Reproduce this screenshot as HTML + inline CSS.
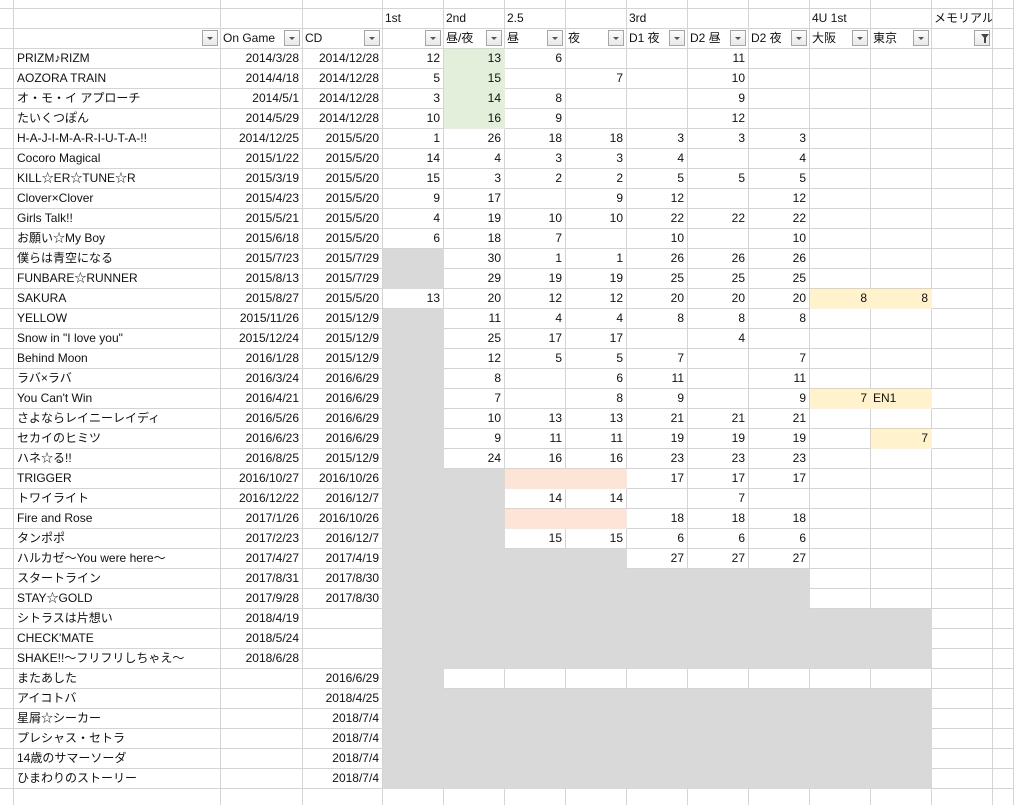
<!DOCTYPE html>
<html><head><meta charset="utf-8">
<style>
html,body{margin:0;padding:0;background:#fff;width:1014px;height:805px;overflow:hidden}
table{border-collapse:separate;border-spacing:0;table-layout:fixed;width:1014px;font-family:"Liberation Sans","Noto Sans CJK JP",sans-serif;font-size:12px;color:#111}
td{box-sizing:border-box;height:20px;padding:0 3px 0 2px;border-right:1px solid #d4d4d4;border-bottom:1px solid #d4d4d4;white-space:nowrap;overflow:hidden;text-align:right;position:relative;line-height:19px}
tr.t td{height:9px}
td.l{text-align:left;padding-left:3px}
td.g{background:#d9d9d9;border-color:#d9d9d9}
td.e{background:#e2efda;border-color:#e2efda}
td.p{background:#fce4d6;border-color:#fce4d6}
td.y{background:#fff2cc;border-color:#fff2cc}
td.h{text-align:left;padding-left:2px}
.b{position:absolute;right:2px;top:1px;width:14px;height:14px;border:1px solid #a6a6a6;background:linear-gradient(#fdfdfd,#e8e8e8)}
.b:after{content:"";position:absolute;left:4px;top:6px;border-left:3px solid transparent;border-right:3px solid transparent;border-top:3px solid #555}
.f:after{left:6px;top:3px;border-left:4px solid transparent;border-right:4px solid transparent;border-top:5px solid #444}
.f:before{content:"";position:absolute;left:9px;top:7px;width:2px;height:5px;background:#444}
</style></head><body>
<table>
<colgroup><col style="width:14px"><col style="width:207px"><col style="width:82px"><col style="width:80px"><col style="width:61px"><col style="width:61px"><col style="width:61px"><col style="width:61px"><col style="width:61px"><col style="width:61px"><col style="width:61px"><col style="width:61px"><col style="width:61px"><col style="width:61px"><col style="width:21px"></colgroup>
<tr class="t"><td></td><td></td><td></td><td></td><td></td><td></td><td></td><td></td><td></td><td></td><td></td><td></td><td></td><td></td><td></td></tr>
<tr><td></td><td></td><td></td><td></td><td class="h">1st</td><td class="h">2nd</td><td class="h">2.5</td><td></td><td class="h">3rd</td><td></td><td></td><td class="h">4U 1st</td><td></td><td class="h">メモリアル</td><td></td></tr>
<tr><td></td><td><span class="b"></span></td><td class="h">On Game<span class="b"></span></td><td class="h">CD<span class="b"></span></td><td><span class="b"></span></td><td class="h">昼/夜<span class="b"></span></td><td class="h">昼<span class="b"></span></td><td class="h">夜<span class="b"></span></td><td class="h">D1 夜<span class="b"></span></td><td class="h">D2 昼<span class="b"></span></td><td class="h">D2 夜<span class="b"></span></td><td class="h">大阪<span class="b"></span></td><td class="h">東京<span class="b"></span></td><td><span class="b f"></span></td><td></td></tr>
<tr><td></td><td class="l">PRIZM♪RIZM</td><td>2014/3/28</td><td>2014/12/28</td><td>12</td><td class="e">13</td><td>6</td><td></td><td></td><td>11</td><td></td><td></td><td></td><td></td><td></td></tr>
<tr><td></td><td class="l">AOZORA TRAIN</td><td>2014/4/18</td><td>2014/12/28</td><td>5</td><td class="e">15</td><td></td><td>7</td><td></td><td>10</td><td></td><td></td><td></td><td></td><td></td></tr>
<tr><td></td><td class="l">オ・モ・イ アプローチ</td><td>2014/5/1</td><td>2014/12/28</td><td>3</td><td class="e">14</td><td>8</td><td></td><td></td><td>9</td><td></td><td></td><td></td><td></td><td></td></tr>
<tr><td></td><td class="l">たいくつぽん</td><td>2014/5/29</td><td>2014/12/28</td><td>10</td><td class="e">16</td><td>9</td><td></td><td></td><td>12</td><td></td><td></td><td></td><td></td><td></td></tr>
<tr><td></td><td class="l">H-A-J-I-M-A-R-I-U-T-A-!!</td><td>2014/12/25</td><td>2015/5/20</td><td>1</td><td>26</td><td>18</td><td>18</td><td>3</td><td>3</td><td>3</td><td></td><td></td><td></td><td></td></tr>
<tr><td></td><td class="l">Cocoro Magical</td><td>2015/1/22</td><td>2015/5/20</td><td>14</td><td>4</td><td>3</td><td>3</td><td>4</td><td></td><td>4</td><td></td><td></td><td></td><td></td></tr>
<tr><td></td><td class="l">KILL☆ER☆TUNE☆R</td><td>2015/3/19</td><td>2015/5/20</td><td>15</td><td>3</td><td>2</td><td>2</td><td>5</td><td>5</td><td>5</td><td></td><td></td><td></td><td></td></tr>
<tr><td></td><td class="l">Clover×Clover</td><td>2015/4/23</td><td>2015/5/20</td><td>9</td><td>17</td><td></td><td>9</td><td>12</td><td></td><td>12</td><td></td><td></td><td></td><td></td></tr>
<tr><td></td><td class="l">Girls Talk!!</td><td>2015/5/21</td><td>2015/5/20</td><td>4</td><td>19</td><td>10</td><td>10</td><td>22</td><td>22</td><td>22</td><td></td><td></td><td></td><td></td></tr>
<tr><td></td><td class="l">お願い☆My Boy</td><td>2015/6/18</td><td>2015/5/20</td><td>6</td><td>18</td><td>7</td><td></td><td>10</td><td></td><td>10</td><td></td><td></td><td></td><td></td></tr>
<tr><td></td><td class="l">僕らは青空になる</td><td>2015/7/23</td><td>2015/7/29</td><td class="g"></td><td>30</td><td>1</td><td>1</td><td>26</td><td>26</td><td>26</td><td></td><td></td><td></td><td></td></tr>
<tr><td></td><td class="l">FUNBARE☆RUNNER</td><td>2015/8/13</td><td>2015/7/29</td><td class="g"></td><td>29</td><td>19</td><td>19</td><td>25</td><td>25</td><td>25</td><td></td><td></td><td></td><td></td></tr>
<tr><td></td><td class="l">SAKURA</td><td>2015/8/27</td><td>2015/5/20</td><td>13</td><td>20</td><td>12</td><td>12</td><td>20</td><td>20</td><td>20</td><td class="y">8</td><td class="y">8</td><td></td><td></td></tr>
<tr><td></td><td class="l">YELLOW</td><td>2015/11/26</td><td>2015/12/9</td><td class="g"></td><td>11</td><td>4</td><td>4</td><td>8</td><td>8</td><td>8</td><td></td><td></td><td></td><td></td></tr>
<tr><td></td><td class="l">Snow in "I love you"</td><td>2015/12/24</td><td>2015/12/9</td><td class="g"></td><td>25</td><td>17</td><td>17</td><td></td><td>4</td><td></td><td></td><td></td><td></td><td></td></tr>
<tr><td></td><td class="l">Behind Moon</td><td>2016/1/28</td><td>2015/12/9</td><td class="g"></td><td>12</td><td>5</td><td>5</td><td>7</td><td></td><td>7</td><td></td><td></td><td></td><td></td></tr>
<tr><td></td><td class="l">ラバ×ラバ</td><td>2016/3/24</td><td>2016/6/29</td><td class="g"></td><td>8</td><td></td><td>6</td><td>11</td><td></td><td>11</td><td></td><td></td><td></td><td></td></tr>
<tr><td></td><td class="l">You Can't Win</td><td>2016/4/21</td><td>2016/6/29</td><td class="g"></td><td>7</td><td></td><td>8</td><td>9</td><td></td><td>9</td><td class="y">7</td><td class="y h">EN1</td><td></td><td></td></tr>
<tr><td></td><td class="l">さよならレイニーレイディ</td><td>2016/5/26</td><td>2016/6/29</td><td class="g"></td><td>10</td><td>13</td><td>13</td><td>21</td><td>21</td><td>21</td><td></td><td></td><td></td><td></td></tr>
<tr><td></td><td class="l">セカイのヒミツ</td><td>2016/6/23</td><td>2016/6/29</td><td class="g"></td><td>9</td><td>11</td><td>11</td><td>19</td><td>19</td><td>19</td><td></td><td class="y">7</td><td></td><td></td></tr>
<tr><td></td><td class="l">ハネ☆る!!</td><td>2016/8/25</td><td>2015/12/9</td><td class="g"></td><td>24</td><td>16</td><td>16</td><td>23</td><td>23</td><td>23</td><td></td><td></td><td></td><td></td></tr>
<tr><td></td><td class="l">TRIGGER</td><td>2016/10/27</td><td>2016/10/26</td><td class="g"></td><td class="g"></td><td class="p"></td><td class="p"></td><td>17</td><td>17</td><td>17</td><td></td><td></td><td></td><td></td></tr>
<tr><td></td><td class="l">トワイライト</td><td>2016/12/22</td><td>2016/12/7</td><td class="g"></td><td class="g"></td><td>14</td><td>14</td><td></td><td>7</td><td></td><td></td><td></td><td></td><td></td></tr>
<tr><td></td><td class="l">Fire and Rose</td><td>2017/1/26</td><td>2016/10/26</td><td class="g"></td><td class="g"></td><td class="p"></td><td class="p"></td><td>18</td><td>18</td><td>18</td><td></td><td></td><td></td><td></td></tr>
<tr><td></td><td class="l">タンポポ</td><td>2017/2/23</td><td>2016/12/7</td><td class="g"></td><td class="g"></td><td>15</td><td>15</td><td>6</td><td>6</td><td>6</td><td></td><td></td><td></td><td></td></tr>
<tr><td></td><td class="l">ハルカゼ～You were here～</td><td>2017/4/27</td><td>2017/4/19</td><td class="g"></td><td class="g"></td><td class="g"></td><td class="g"></td><td>27</td><td>27</td><td>27</td><td></td><td></td><td></td><td></td></tr>
<tr><td></td><td class="l">スタートライン</td><td>2017/8/31</td><td>2017/8/30</td><td class="g"></td><td class="g"></td><td class="g"></td><td class="g"></td><td class="g"></td><td class="g"></td><td class="g"></td><td></td><td></td><td></td><td></td></tr>
<tr><td></td><td class="l">STAY☆GOLD</td><td>2017/9/28</td><td>2017/8/30</td><td class="g"></td><td class="g"></td><td class="g"></td><td class="g"></td><td class="g"></td><td class="g"></td><td class="g"></td><td></td><td></td><td></td><td></td></tr>
<tr><td></td><td class="l">シトラスは片想い</td><td>2018/4/19</td><td></td><td class="g"></td><td class="g"></td><td class="g"></td><td class="g"></td><td class="g"></td><td class="g"></td><td class="g"></td><td class="g"></td><td class="g"></td><td></td><td></td></tr>
<tr><td></td><td class="l">CHECK'MATE</td><td>2018/5/24</td><td></td><td class="g"></td><td class="g"></td><td class="g"></td><td class="g"></td><td class="g"></td><td class="g"></td><td class="g"></td><td class="g"></td><td class="g"></td><td></td><td></td></tr>
<tr><td></td><td class="l">SHAKE!!～フリフリしちゃえ～</td><td>2018/6/28</td><td></td><td class="g"></td><td class="g"></td><td class="g"></td><td class="g"></td><td class="g"></td><td class="g"></td><td class="g"></td><td class="g"></td><td class="g"></td><td></td><td></td></tr>
<tr><td></td><td class="l">またあした</td><td></td><td>2016/6/29</td><td class="g"></td><td></td><td></td><td></td><td></td><td></td><td></td><td></td><td></td><td></td><td></td></tr>
<tr><td></td><td class="l">アイコトバ</td><td></td><td>2018/4/25</td><td class="g"></td><td class="g"></td><td class="g"></td><td class="g"></td><td class="g"></td><td class="g"></td><td class="g"></td><td class="g"></td><td class="g"></td><td></td><td></td></tr>
<tr><td></td><td class="l">星屑☆シーカー</td><td></td><td>2018/7/4</td><td class="g"></td><td class="g"></td><td class="g"></td><td class="g"></td><td class="g"></td><td class="g"></td><td class="g"></td><td class="g"></td><td class="g"></td><td></td><td></td></tr>
<tr><td></td><td class="l">プレシャス・セトラ</td><td></td><td>2018/7/4</td><td class="g"></td><td class="g"></td><td class="g"></td><td class="g"></td><td class="g"></td><td class="g"></td><td class="g"></td><td class="g"></td><td class="g"></td><td></td><td></td></tr>
<tr><td></td><td class="l">14歳のサマーソーダ</td><td></td><td>2018/7/4</td><td class="g"></td><td class="g"></td><td class="g"></td><td class="g"></td><td class="g"></td><td class="g"></td><td class="g"></td><td class="g"></td><td class="g"></td><td></td><td></td></tr>
<tr><td></td><td class="l">ひまわりのストーリー</td><td></td><td>2018/7/4</td><td class="g"></td><td class="g"></td><td class="g"></td><td class="g"></td><td class="g"></td><td class="g"></td><td class="g"></td><td class="g"></td><td class="g"></td><td></td><td></td></tr>
<tr><td></td><td></td><td></td><td></td><td></td><td></td><td></td><td></td><td></td><td></td><td></td><td></td><td></td><td></td><td></td></tr>
</table>
</body></html>
